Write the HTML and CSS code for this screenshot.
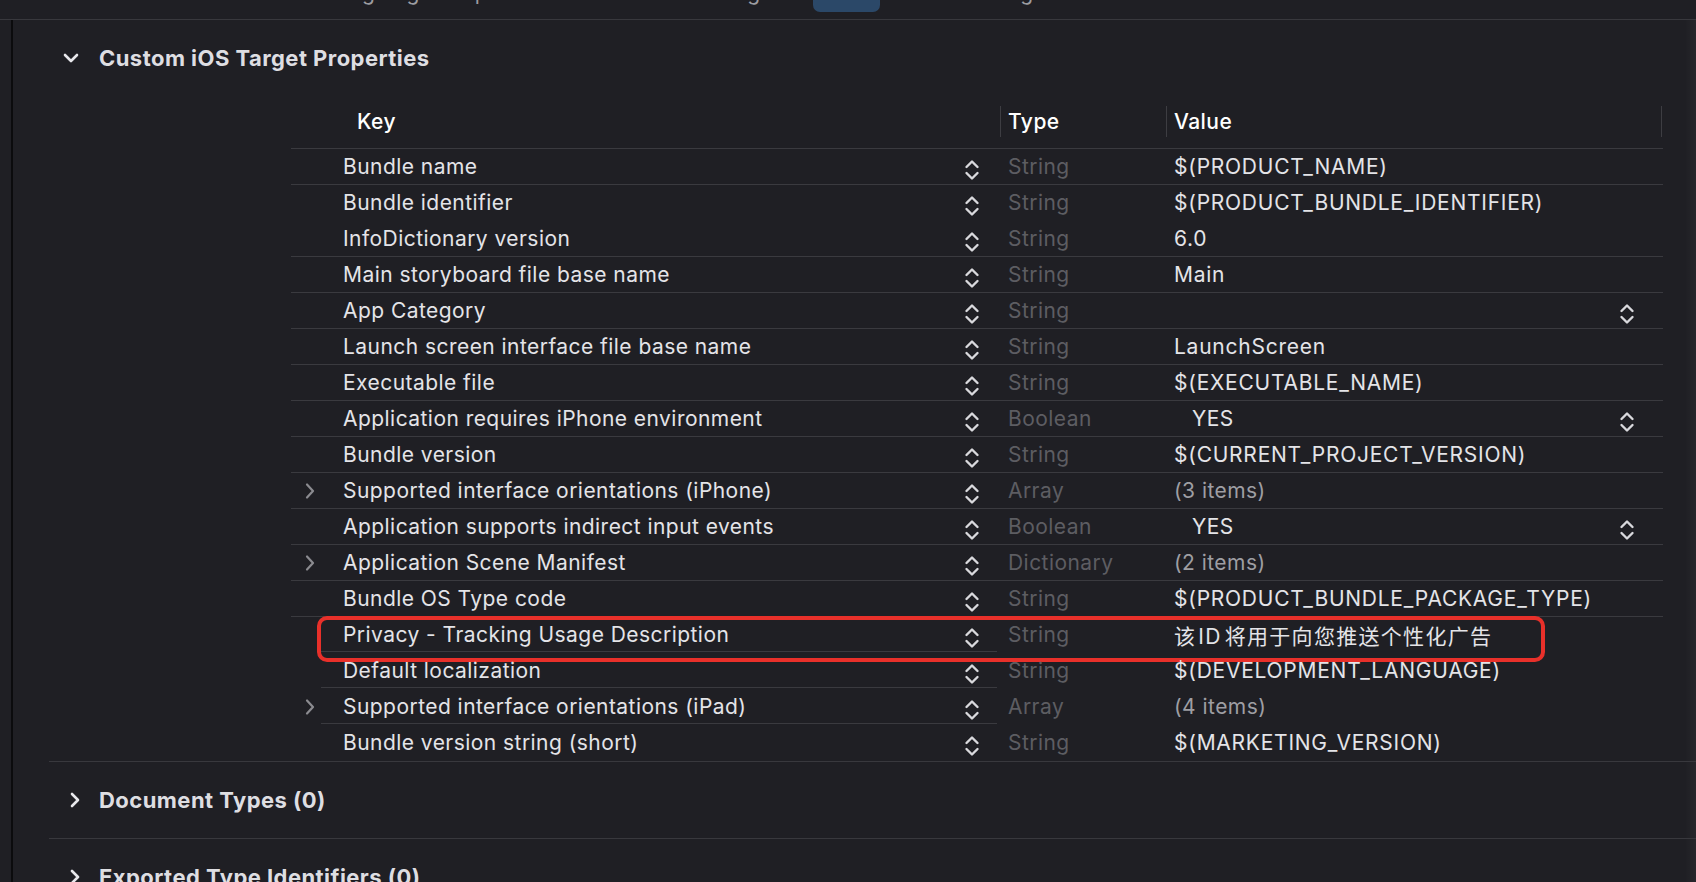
FILE: index.html
```html
<!DOCTYPE html>
<html lang="en">
<head>
<meta charset="utf-8">
<title>Info - Custom iOS Target Properties</title>
<link rel="stylesheet" href="styles.css">
</head>
<body>
<div class="tabbar">
  <div class="tabs">
    <span class="tab t-general">General</span>
    <span class="tab t-signing">Signing &amp; Capabilities</span>
    <span class="tab t-resource">Resource Tags</span>
    <span class="tab t-info">Info</span>
    <span class="tab t-settings">Build Settings</span>
    <span class="tab t-phases">Build Phases</span>
    <span class="tab t-rules">Build Rules</span>
  </div>
</div>
<div class="main">
  <div class="gutter"></div>
  <div class="vline"></div>
  <div class="content">
    <section class="section open">
      <div class="sec-title">
        <svg class="sec-chev" width="16" height="16" viewBox="0 0 16 16"><path d="M2 5 L8 11 L14 5" /></svg>
        <span>Custom iOS Target Properties</span>
      </div>
      <div class="table">
        <div class="row head">
          <div class="c-disc"></div>
          <div class="c-key">Key</div>
          <div class="c-step"></div>
          <div class="c-gap"></div>
          <div class="c-type">Type</div>
          <div class="c-val">Value</div>
        </div>

        <div class="row">
          <div class="c-disc"></div><div class="c-key">Bundle name</div>
          <div class="c-step"><svg class="stepper" viewBox="0 0 16 24"><path d="M2.5 9 L8 3.5 L13.5 9 M2.5 15 L8 20.5 L13.5 15"/></svg></div>
          <div class="c-gap"></div><div class="c-type">String</div><div class="c-val">$(PRODUCT_NAME)</div>
        </div>
        <div class="row noline">
          <div class="c-disc"></div><div class="c-key">Bundle identifier</div>
          <div class="c-step"><svg class="stepper" viewBox="0 0 16 24"><path d="M2.5 9 L8 3.5 L13.5 9 M2.5 15 L8 20.5 L13.5 15"/></svg></div>
          <div class="c-gap"></div><div class="c-type">String</div><div class="c-val">$(PRODUCT_BUNDLE_IDENTIFIER)</div>
        </div>
        <div class="row">
          <div class="c-disc"></div><div class="c-key">InfoDictionary version</div>
          <div class="c-step"><svg class="stepper" viewBox="0 0 16 24"><path d="M2.5 9 L8 3.5 L13.5 9 M2.5 15 L8 20.5 L13.5 15"/></svg></div>
          <div class="c-gap"></div><div class="c-type">String</div><div class="c-val">6.0</div>
        </div>
        <div class="row">
          <div class="c-disc"></div><div class="c-key">Main storyboard file base name</div>
          <div class="c-step"><svg class="stepper" viewBox="0 0 16 24"><path d="M2.5 9 L8 3.5 L13.5 9 M2.5 15 L8 20.5 L13.5 15"/></svg></div>
          <div class="c-gap"></div><div class="c-type">String</div><div class="c-val">Main</div>
        </div>
        <div class="row">
          <div class="c-disc"></div><div class="c-key">App Category</div>
          <div class="c-step"><svg class="stepper" viewBox="0 0 16 24"><path d="M2.5 9 L8 3.5 L13.5 9 M2.5 15 L8 20.5 L13.5 15"/></svg></div>
          <div class="c-gap"></div><div class="c-type">String</div>
          <div class="c-val popup"><span></span><svg class="stepper" viewBox="0 0 16 24"><path d="M2.5 9 L8 3.5 L13.5 9 M2.5 15 L8 20.5 L13.5 15"/></svg></div>
        </div>
        <div class="row">
          <div class="c-disc"></div><div class="c-key">Launch screen interface file base name</div>
          <div class="c-step"><svg class="stepper" viewBox="0 0 16 24"><path d="M2.5 9 L8 3.5 L13.5 9 M2.5 15 L8 20.5 L13.5 15"/></svg></div>
          <div class="c-gap"></div><div class="c-type">String</div><div class="c-val">LaunchScreen</div>
        </div>
        <div class="row">
          <div class="c-disc"></div><div class="c-key">Executable file</div>
          <div class="c-step"><svg class="stepper" viewBox="0 0 16 24"><path d="M2.5 9 L8 3.5 L13.5 9 M2.5 15 L8 20.5 L13.5 15"/></svg></div>
          <div class="c-gap"></div><div class="c-type">String</div><div class="c-val">$(EXECUTABLE_NAME)</div>
        </div>
        <div class="row">
          <div class="c-disc"></div><div class="c-key">Application requires iPhone environment</div>
          <div class="c-step"><svg class="stepper" viewBox="0 0 16 24"><path d="M2.5 9 L8 3.5 L13.5 9 M2.5 15 L8 20.5 L13.5 15"/></svg></div>
          <div class="c-gap"></div><div class="c-type">Boolean</div>
          <div class="c-val popup"><span class="yes">YES</span><svg class="stepper" viewBox="0 0 16 24"><path d="M2.5 9 L8 3.5 L13.5 9 M2.5 15 L8 20.5 L13.5 15"/></svg></div>
        </div>
        <div class="row">
          <div class="c-disc"></div><div class="c-key">Bundle version</div>
          <div class="c-step"><svg class="stepper" viewBox="0 0 16 24"><path d="M2.5 9 L8 3.5 L13.5 9 M2.5 15 L8 20.5 L13.5 15"/></svg></div>
          <div class="c-gap"></div><div class="c-type">String</div><div class="c-val">$(CURRENT_PROJECT_VERSION)</div>
        </div>
        <div class="row">
          <div class="c-disc"><svg class="disc" viewBox="0 0 12 18"><path d="M3 2.5 L9 9 L3 15.5"/></svg></div><div class="c-key">Supported interface orientations (iPhone)</div>
          <div class="c-step"><svg class="stepper" viewBox="0 0 16 24"><path d="M2.5 9 L8 3.5 L13.5 9 M2.5 15 L8 20.5 L13.5 15"/></svg></div>
          <div class="c-gap"></div><div class="c-type">Array</div><div class="c-val dim">(3 items)</div>
        </div>
        <div class="row">
          <div class="c-disc"></div><div class="c-key">Application supports indirect input events</div>
          <div class="c-step"><svg class="stepper" viewBox="0 0 16 24"><path d="M2.5 9 L8 3.5 L13.5 9 M2.5 15 L8 20.5 L13.5 15"/></svg></div>
          <div class="c-gap"></div><div class="c-type">Boolean</div>
          <div class="c-val popup"><span class="yes">YES</span><svg class="stepper" viewBox="0 0 16 24"><path d="M2.5 9 L8 3.5 L13.5 9 M2.5 15 L8 20.5 L13.5 15"/></svg></div>
        </div>
        <div class="row">
          <div class="c-disc"><svg class="disc" viewBox="0 0 12 18"><path d="M3 2.5 L9 9 L3 15.5"/></svg></div><div class="c-key">Application Scene Manifest</div>
          <div class="c-step"><svg class="stepper" viewBox="0 0 16 24"><path d="M2.5 9 L8 3.5 L13.5 9 M2.5 15 L8 20.5 L13.5 15"/></svg></div>
          <div class="c-gap"></div><div class="c-type">Dictionary</div><div class="c-val dim">(2 items)</div>
        </div>
        <div class="row">
          <div class="c-disc"></div><div class="c-key">Bundle OS Type code</div>
          <div class="c-step"><svg class="stepper" viewBox="0 0 16 24"><path d="M2.5 9 L8 3.5 L13.5 9 M2.5 15 L8 20.5 L13.5 15"/></svg></div>
          <div class="c-gap"></div><div class="c-type">String</div><div class="c-val">$(PRODUCT_BUNDLE_PACKAGE_TYPE)</div>
        </div>
        <div class="row partial highlighted">
          <div class="c-disc"></div><div class="c-key">Privacy - Tracking Usage Description</div>
          <div class="c-step"><svg class="stepper" viewBox="0 0 16 24"><path d="M2.5 9 L8 3.5 L13.5 9 M2.5 15 L8 20.5 L13.5 15"/></svg></div>
          <div class="c-gap"></div><div class="c-type">String</div><div class="c-val cjk">该<span class="latin">ID</span>将用于向您推送个性化广告</div>
          <div class="redbox"></div>
        </div>
        <div class="row partial">
          <div class="c-disc"></div><div class="c-key">Default localization</div>
          <div class="c-step"><svg class="stepper" viewBox="0 0 16 24"><path d="M2.5 9 L8 3.5 L13.5 9 M2.5 15 L8 20.5 L13.5 15"/></svg></div>
          <div class="c-gap"></div><div class="c-type">String</div><div class="c-val">$(DEVELOPMENT_LANGUAGE)</div>
        </div>
        <div class="row partial">
          <div class="c-disc"><svg class="disc" viewBox="0 0 12 18"><path d="M3 2.5 L9 9 L3 15.5"/></svg></div><div class="c-key">Supported interface orientations (iPad)</div>
          <div class="c-step"><svg class="stepper" viewBox="0 0 16 24"><path d="M2.5 9 L8 3.5 L13.5 9 M2.5 15 L8 20.5 L13.5 15"/></svg></div>
          <div class="c-gap"></div><div class="c-type">Array</div><div class="c-val dim">(4 items)</div>
        </div>
        <div class="row noline">
          <div class="c-disc"></div><div class="c-key">Bundle version string (short)</div>
          <div class="c-step"><svg class="stepper" viewBox="0 0 16 24"><path d="M2.5 9 L8 3.5 L13.5 9 M2.5 15 L8 20.5 L13.5 15"/></svg></div>
          <div class="c-gap"></div><div class="c-type">String</div><div class="c-val">$(MARKETING_VERSION)</div>
        </div>
      </div>
    </section>
    <section class="section closed">
      <div class="sec-title">
        <svg class="sec-chev" width="16" height="16" viewBox="0 0 16 16"><path d="M5 2 L11 8 L5 14" /></svg>
        <span>Document Types (0)</span>
      </div>
    </section>
    <section class="section closed last">
      <div class="sec-title">
        <svg class="sec-chev" width="16" height="16" viewBox="0 0 16 16"><path d="M5 2 L11 8 L5 14" /></svg>
        <span>Exported Type Identifiers (0)</span>
      </div>
    </section>
  </div>
</div>
</body>
</html>
```
FILE: styles.css
```css
html, body {
  margin: 0;
  padding: 0;
}
body {
  width: 1696px;
  height: 882px;
  overflow: hidden;
  background: #1f1f24;
  color: #e4e4e8;
  font-family: Inter, "Noto Sans", "Noto Sans CJK SC", sans-serif;
  font-size: 21px;
  letter-spacing: 0.45px;
}

/* top tab bar (cut off by the screenshot edge) */
.tabbar {
  height: 19px;
  border-bottom: 1px solid #38383d;
  overflow: hidden;
  background: #1f1f24;
}
.tabs {
  display: grid;
  grid-template-columns: 150px 180px 250px 233px 67px 170px 160px 140px;
  margin-top: -19px;
  height: 31px;
}
.tab {
  line-height: 24px;
  height: 31px;
  color: #9c9ca1;
  font-size: 21px;
  white-space: nowrap;
}
.t-general { grid-column: 2; text-align: center; }
.t-signing { text-align: center; }
.t-resource { text-align: right; padding-right: 41px; }
.t-info {
  background: #2b4868;
  border-radius: 7px;
  color: #ffffff;
  text-align: center;
}
.t-settings { text-align: right; padding-right: 5px; }
.t-phases { text-align: center; }
.t-rules { text-align: center; }

.main {
  display: flex;
  height: 862px;
}
.gutter {
  width: 11px;
  flex: none;
}
.vline {
  width: 2px;
  flex: none;
  background: #0b0b0d;
}
.content {
  flex: 1;
  min-width: 0;
  background: linear-gradient(to right, rgba(255,255,255,0) 0, rgba(255,255,255,0) 1672px, rgba(255,255,255,0.035) 1683px);
}

.section {
  margin-left: 36px;
  border-bottom: 1px solid #38383d;
}
.sec-title {
  display: flex;
  align-items: center;
  height: 75px;
  padding-left: 14px;
  font-weight: 700;
  font-size: 22px;
  letter-spacing: 0.45px;
  color: #dedee2;
}
.closed .sec-title {
  height: 76px;
}
.sec-chev {
  width: 16px;
  height: 16px;
  margin-right: 20px;
  fill: none;
  stroke: #e8e8ec;
  stroke-width: 2.6;
  stroke-linecap: round;
  stroke-linejoin: round;
}
.closed .sec-chev {
  margin-left: 4px;
  margin-right: 16px;
}

/* table */
.table {
  margin-left: 242px;
  width: 1372px;
}
.row {
  display: grid;
  grid-template-columns: 52px 615px 28px 14px 166px 1fr;
  height: 36px;
  align-items: center;
  border-bottom: 1px solid #3a3a3f;
  box-sizing: border-box;
  position: relative;
}
.row.head {
  height: 54px;
  font-weight: 500;
  color: #ffffff;
}
.row.noline {
  border-bottom-color: transparent;
}
.row.partial {
  border-bottom-color: transparent;
  background: linear-gradient(#3a3a3f, #3a3a3f) no-repeat;
  background-size: 676px 1px;
  background-position: 30px 100%;
}
.head .c-key {
  padding-left: 14px;
}
.head .c-type,
.head .c-val {
  border-left: 1px solid #3d3d42;
  height: 31px;
  line-height: 31px;
  padding-left: 7px;
  color: #ffffff;
  letter-spacing: 0.45px;
}
.head .c-val {
  border-right: 1px solid #3d3d42;
  margin-right: 1px;
}
.c-disc {
  display: flex;
  align-items: center;
  padding-left: 13px;
}
.c-key {
  white-space: nowrap;
}
.c-step {
  display: flex;
  justify-content: center;
}
.c-type {
  padding-left: 8px;
  color: #5d5d62;
}
.c-val {
  padding-left: 8px;
  white-space: nowrap;
  letter-spacing: 0.75px;
}
.c-val.dim {
  color: #9e9ea3;
  letter-spacing: 0.45px;
}
.c-val.popup {
  display: flex;
  justify-content: space-between;
  align-items: center;
  padding-right: 28px;
  letter-spacing: 0.45px;
}
.yes {
  padding-left: 18px;
}
.cjk {
  font-family: Inter, "Noto Sans CJK SC", sans-serif;
  letter-spacing: 1.3px;
}
.latin {
  margin: 0 3px 0 2px;
}
.stepper {
  width: 16px;
  height: 24px;
  margin-top: 7px;
  fill: none;
  stroke: #d9d9dd;
  stroke-width: 2.4;
  stroke-linecap: round;
  stroke-linejoin: round;
}
.disc {
  width: 12px;
  height: 18px;
  fill: none;
  stroke: #8b8b90;
  stroke-width: 2.2;
  stroke-linecap: round;
  stroke-linejoin: round;
}
.redbox {
  position: absolute;
  left: 26px;
  top: -1px;
  width: 1228px;
  height: 46px;
  box-sizing: border-box;
  border: 4px solid #e8302a;
  border-radius: 10px;
  pointer-events: none;
}
```
